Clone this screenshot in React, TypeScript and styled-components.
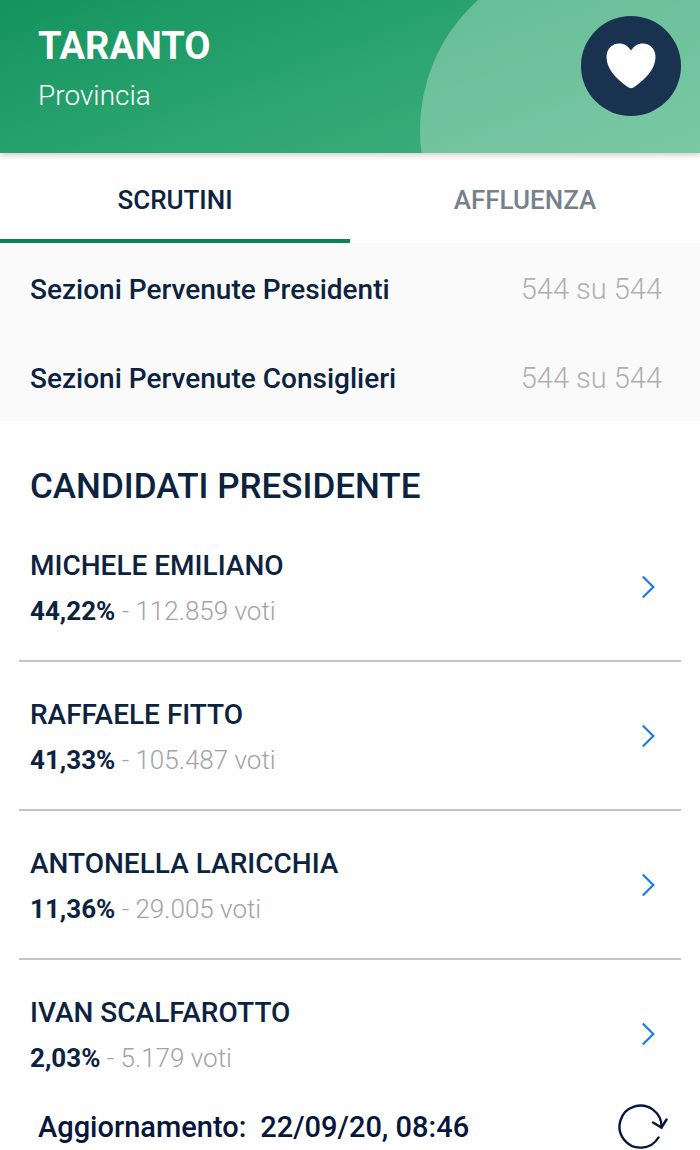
import React, { useState } from "react";
import styled, { createGlobalStyle } from "styled-components";

const GlobalStyle = createGlobalStyle`
  * { box-sizing: border-box; }
  body {
    margin: 0;
    background: #fefefe;
    color: #0c2340;
    font-family: Roboto, "Liberation Sans", sans-serif;
  }
  button { font-family: inherit; }
`;

const Page = styled.div`
  display: flex;
  flex-direction: column;
  min-height: 100vh;
`;

const Header = styled.header`
  position: relative;
  z-index: 1;
  display: flex;
  justify-content: space-between;
  align-items: flex-start;
  min-height: 153px;
  padding: 16px 19px 0 38px;
  color: #fff;
  background: linear-gradient(160deg, #14935f 0%, #2fa772 55%, #45b27f 100%);
  box-shadow: 0 2px 6px rgba(0, 0, 0, 0.2);
`;

const HeaderArt = styled.div`
  position: absolute;
  inset: 0;
  overflow: hidden;

  &::after {
    content: "";
    position: absolute;
    top: -45px;
    right: -70px;
    width: 350px;
    height: 350px;
    border-radius: 50%;
    background: rgba(255, 255, 255, 0.29);
  }
`;

const Place = styled.div`
  position: relative;
`;

const Title = styled.h1`
  margin: 0;
  font-size: 38px;
  line-height: 60px;
  font-weight: 700;
`;

const Subtitle = styled.p`
  margin: 0;
  font-size: 28px;
  line-height: 40px;
  font-weight: 300;
`;

const FavouriteButton = styled.button`
  position: relative;
  display: grid;
  place-items: center;
  width: 100px;
  height: 100px;
  padding: 0;
  border: 0;
  border-radius: 50%;
  background: #18324f;
`;

const Tabs = styled.div`
  display: grid;
  grid-template-columns: 1fr 1fr;
`;

const Tab = styled.button<{ $active: boolean }>`
  height: 90px;
  padding: 8px 0 0;
  border: 0;
  border-bottom: 4px solid ${(p) => (p.$active ? "#0b8152" : "transparent")};
  background: none;
  color: ${(p) => (p.$active ? "#0c2340" : "#77818d")};
  font-size: 26px;
  font-weight: 500;
`;

const Sections = styled.dl`
  margin: 0;
  padding: 0 38px 0 30px;
  background: #fafafa;
`;

const SectionRow = styled.div`
  display: flex;
  justify-content: space-between;
  align-items: center;
  height: 89px;
  padding-top: 3px;
`;

const SectionLabel = styled.dt`
  font-size: 28px;
  font-weight: 500;
`;

const SectionValue = styled.dd`
  margin: 0;
  color: #b0b0b0;
  font-size: 29px;
  font-weight: 300;
`;

const Heading = styled.h2`
  margin: 0;
  padding: 44px 30px 4px;
  font-size: 35px;
  line-height: 44px;
  font-weight: 500;
`;

const Candidates = styled.ul`
  flex: 1;
  margin: 0;
  padding: 0 19px;
  list-style: none;
`;

const CandidateButton = styled.button`
  display: flex;
  justify-content: space-between;
  align-items: center;
  width: 100%;
  padding: 29px 26px 28px 11px;
  border: 0;
  background: none;
  color: inherit;
  text-align: left;
`;

const Candidate = styled.li`
  &:not(:last-child) {
    border-bottom: 2px solid #c4c4c6;
  }

  &:last-child ${CandidateButton} {
    padding-bottom: 24px;
  }
`;

const Name = styled.span`
  display: block;
  font-size: 28px;
  line-height: 48px;
  font-weight: 500;
`;

const Result = styled.span`
  display: block;
  color: #a3a3a3;
  font-size: 26px;
  line-height: 42px;
  font-weight: 300;
`;

const Share = styled.strong`
  color: #0c2340;
  font-weight: 700;
`;

const Footer = styled.footer`
  display: flex;
  justify-content: space-between;
  align-items: center;
  height: 47px;
  padding: 0 32px 0 38px;
  color: #08153c;
  font-size: 29px;
  font-weight: 500;
`;

const Updated = styled.p`
  display: flex;
  gap: 14px;
  margin: 0;
`;

const RefreshButton = styled.button`
  display: grid;
  padding: 0;
  border: 0;
  background: none;
  color: inherit;
`;

const sections = [
  { label: "Sezioni Pervenute Presidenti", value: "544 su 544" },
  { label: "Sezioni Pervenute Consiglieri", value: "544 su 544" },
];

const candidates = [
  { name: "MICHELE EMILIANO", share: "44,22%", votes: "112.859" },
  { name: "RAFFAELE FITTO", share: "41,33%", votes: "105.487" },
  { name: "ANTONELLA LARICCHIA", share: "11,36%", votes: "29.005" },
  { name: "IVAN SCALFAROTTO", share: "2,03%", votes: "5.179" },
];

const tabs = ["SCRUTINI", "AFFLUENZA"];

const HeartIcon = () => (
  <svg width="50" height="46" viewBox="0 0 50 46" fill="#fff" aria-hidden="true">
    <path d="M25 7.500C28 3 32 .5 37 .5C44 .5 49.500 6 49.500 14C49.500 25 41 35 29 43.500Q25 47 21 43.500C9 35 .5 25 .5 14C.5 6 6 .5 13 .5C18 .5 22 3 25 7.500Z" />
  </svg>
);

const ChevronIcon = () => (
  <svg width="13" height="24" viewBox="0 0 13 24" fill="none" stroke="#1a7bea" strokeWidth="2.200" aria-hidden="true">
    <path d="M.8 1.500L11.300 12L.8 22.500" />
  </svg>
);

const RefreshIcon = () => (
  <svg width="50" height="46" viewBox="0 0 50 46" fill="none" stroke="currentColor" strokeWidth="2.400" strokeLinecap="round" aria-hidden="true">
    <path d="M40.500 33.500A21 21 0 1 1 43.500 23.500" />
    <path d="M35 18.500L43.500 23.500L48.500 15.500" />
  </svg>
);

export default function App() {
  const [active, setActive] = useState(tabs[0]);

  return (
    <Page>
      <GlobalStyle />
      <Header>
        <HeaderArt />
        <Place>
          <Title>TARANTO</Title>
          <Subtitle>Provincia</Subtitle>
        </Place>
        <FavouriteButton aria-label="Preferito">
          <HeartIcon />
        </FavouriteButton>
      </Header>
      <Tabs role="tablist">
        {tabs.map((tab) => (
          <Tab
            key={tab}
            role="tab"
            aria-selected={tab === active}
            $active={tab === active}
            onClick={() => setActive(tab)}
          >
            {tab}
          </Tab>
        ))}
      </Tabs>
      <Sections>
        {sections.map((s) => (
          <SectionRow key={s.label}>
            <SectionLabel>{s.label}</SectionLabel>
            <SectionValue>{s.value}</SectionValue>
          </SectionRow>
        ))}
      </Sections>
      <Heading>CANDIDATI PRESIDENTE</Heading>
      <Candidates>
        {candidates.map((c) => (
          <Candidate key={c.name}>
            <CandidateButton>
              <span>
                <Name>{c.name}</Name>
                <Result>
                  <Share>{c.share}</Share> - {c.votes} voti
                </Result>
              </span>
              <ChevronIcon />
            </CandidateButton>
          </Candidate>
        ))}
      </Candidates>
      <Footer>
        <Updated>
          <span>Aggiornamento:</span>
          <time dateTime="2020-09-22T08:46">22/09/20, 08:46</time>
        </Updated>
        <RefreshButton aria-label="Aggiorna">
          <RefreshIcon />
        </RefreshButton>
      </Footer>
    </Page>
  );
}
